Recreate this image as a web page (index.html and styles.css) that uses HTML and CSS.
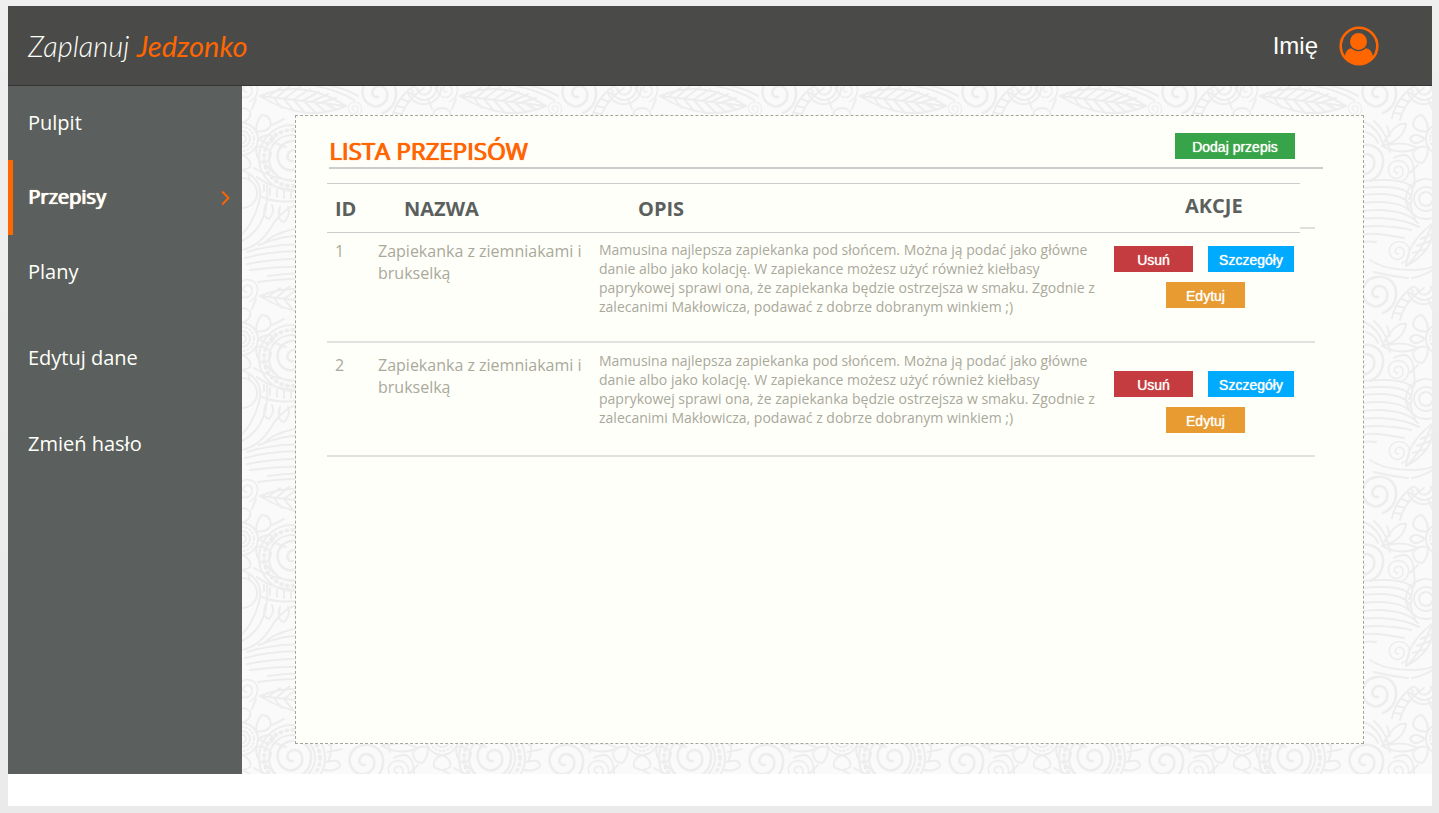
FILE: index.html
```html
<!DOCTYPE html>
<html lang="pl">
<head>
<meta charset="utf-8">
<meta name="viewport" content="width=device-width, initial-scale=1">
<title>Zaplanuj Jedzonko – Lista przepisów</title>
<link rel="stylesheet" href="styles.css">
</head>
<body>
<div class="page">
  <header class="topbar">
    <a class="logo" href="#"><span class="logo-light">Zaplanuj</span> <span class="logo-accent">Jedzonko</span></a>
    <a class="user" href="#">
      <span>Imię</span>
      <svg class="avatar" viewBox="0 0 40 40" aria-hidden="true">
        <circle cx="20" cy="20" r="18.3" fill="none" stroke="#ff6600" stroke-width="2.6"/>
        <circle cx="19.500" cy="15.500" r="8.500" fill="#ff6600"/>
        <path fill="#ff6600" d="M6 31C6.200 26.500 8 23 12 22.300C14.500 23.500 16 25.300 19.500 25.300C23 25.300 25 23.500 27 22.300C31.500 23 33.500 26.500 33.800 31C30.500 36 26 38.500 20 38.500C14 38.500 9.500 36 6 31Z"/>
      </svg>
    </a>
  </header>
  <div class="layout">
    <nav class="sidebar">
      <a class="nav-item" href="#">Pulpit</a>
      <a class="nav-item active" href="#" aria-current="page">Przepisy
        <svg class="chevron" viewBox="0 0 9 16" aria-hidden="true"><path d="M1.200 1.500L7.500 8L1.200 14.500" fill="none" stroke="#ff6600" stroke-width="1.800"/></svg>
      </a>
      <a class="nav-item" href="#">Plany</a>
      <a class="nav-item tall" href="#">Edytuj dane</a>
      <a class="nav-item tall" href="#">Zmień hasło</a>
    </nav>
    <main class="content">
      <section class="card">
        <div class="card-head">
          <h1>LISTA PRZEPISÓW</h1>
          <button class="btn green" type="button">Dodaj przepis</button>
        </div>
        <table class="recipes">
          <colgroup><col class="c-id"><col class="c-name"><col class="c-desc"><col class="c-act"><col class="c-end"></colgroup>
          <thead>
            <tr>
              <th scope="col">ID</th>
              <th scope="col" class="h-name">NAZWA</th>
              <th scope="col" class="h-desc">OPIS</th>
              <th scope="col" class="h-act">AKCJE</th>
              <td class="h-end"><span class="stub"></span></td>
            </tr>
          </thead>
          <tbody>
            <tr class="first">
              <td class="name">1</td>
              <td class="name">Zapiekanka z ziemniakami i brukselką</td>
              <td class="desc">Mamusina najlepsza zapiekanka pod słońcem. Można ją podać jako główne danie albo jako kolację. W zapiekance możesz użyć również kiełbasy paprykowej sprawi ona, że zapiekanka będzie ostrzejsza w smaku. Zgodnie z zalecanimi Makłowicza, podawać z dobrze dobranym winkiem ;)</td>
              <td class="act" colspan="2">
                <div class="actions">
                  <button class="btn red" type="button">Usuń</button>
                  <button class="btn blue" type="button">Szczegóły</button>
                  <button class="btn amber" type="button">Edytuj</button>
                </div>
              </td>
            </tr>
            <tr class="next">
              <td class="name">2</td>
              <td class="name">Zapiekanka z ziemniakami i brukselką</td>
              <td class="desc">Mamusina najlepsza zapiekanka pod słońcem. Można ją podać jako główne danie albo jako kolację. W zapiekance możesz użyć również kiełbasy paprykowej sprawi ona, że zapiekanka będzie ostrzejsza w smaku. Zgodnie z zalecanimi Makłowicza, podawać z dobrze dobranym winkiem ;)</td>
              <td class="act" colspan="2">
                <div class="actions">
                  <button class="btn red" type="button">Usuń</button>
                  <button class="btn blue" type="button">Szczegóły</button>
                  <button class="btn amber" type="button">Edytuj</button>
                </div>
              </td>
            </tr>
          </tbody>
        </table>
      </section>
    </main>
  </div>
</div>
</body>
</html>
```
FILE: styles.css
```css
* { box-sizing: border-box; }

body {
  margin: 0;
  padding: 6px 7px 7px 8px;
  min-height: 100vh;
  display: flex;
  background: linear-gradient(#efefef, #eaeaea);
  font-family: "Open Sans", "Noto Sans", sans-serif;
}

a { color: inherit; text-decoration: none; }

.page {
  flex: 1;
  display: flex;
  flex-direction: column;
  padding-bottom: 32px;
  background: #fff;
}

.topbar {
  display: flex;
  align-items: center;
  justify-content: space-between;
  height: 80px;
  padding: 0 53px 0 20px;
  background: #4a4a48;
  border-bottom: 1px solid #383634;
}

.logo {
  font: italic 300 29px "Lato", sans-serif;
  white-space: nowrap;
}
.logo-light { color: #fefefa; }
.logo-accent { color: #ff6600; font-weight: 400; }

.user {
  display: flex;
  align-items: center;
  gap: 21px;
  color: #fffffa;
  font: 24px "Liberation Sans", Arial, sans-serif;
}
.avatar { width: 40px; height: 40px; }

.layout { flex: 1; display: flex; }

.sidebar {
  flex: 0 0 234px;
  display: flex;
  flex-direction: column;
  background: #5b5f5e;
  color: #fffffa;
  font-size: 20px;
}
.nav-item {
  display: flex;
  align-items: center;
  justify-content: space-between;
  height: 75px;
  padding: 0 12px 2px 20px;
}
.nav-item:first-child { height: 74px; }
.nav-item.active {
  padding-left: 15px;
  border-left: 5px solid #ff6600;
  text-shadow: 0 0 1px #fffffa, 1px 0 #fffffa;
}
.nav-item.tall { height: 86px; }
.nav-item:not(.tall) + .tall { margin-top: 5px; }
.chevron { width: 9px; height: 16px; margin-top: 3px; }

.content {
  flex: 1;
  min-width: 0;
  display: flex;
  padding: 29px 68px 30px 53px;
  background-color: #fafafa;
  background-image: url("data:image/svg+xml,%3Csvg xmlns='http://www.w3.org/2000/svg' width='200' height='200' fill='none' stroke='%23ededed' stroke-width='2' stroke-linecap='round'%3E%3Cdefs%3E%3Cpath id='s' d='M1 3C-3 4-6 0-4-4C-1-10 8-9 10-2C12 7 4 14-4 12C-14 9-17-2-12-10C-7-18 6-20 14-13Q20-7 19 1Q18 14 6 19' stroke-width='2.600'/%3E%3Cg id='f'%3E%3Ccircle r='4'/%3E%3Ccircle r='8'/%3E%3Ccircle r='12' stroke-dasharray='1 3'/%3E%3Ccircle r='16'/%3E%3Cpath d='M0-16Q10-20 8-28Q0-34-8-28Q-10-20 0-16M14-8Q25-6 29-14Q28-24 20-24Q14-18 14-8M14 8Q14 20 20 24Q28 24 29 14Q25 6 14 8M0 16Q-10 20-8 28Q0 34 8 28Q10 20 0 16M17 0Q28-8 32 0Q28 8 17 0M-14-8Q-25-6-29-14Q-28-24-20-24Q-14-18-14-8M-14 8Q-14 20-20 24Q-28 24-29 14Q-25 6-14 8M-17 0Q-28-8-32 0Q-28 8-17 0M10-30L14-40M30-14L42-20M33 4L44 8M24 26L32 34M6 34L8 42M-10-30L-14-40M-24 26L-32 34'/%3E%3C/g%3E%3C/defs%3E%3Cuse href='%23s' transform='translate(135 8)'/%3E%3Cuse href='%23s' transform='translate(135 208)'/%3E%3Cuse href='%23s' transform='translate(50 72)'/%3E%3Cuse href='%23s' transform='translate(122 76)'/%3E%3Cuse href='%23s' transform='translate(155 85) scale(.6)'/%3E%3Cuse href='%23s' transform='translate(156 166) scale(.6)'/%3E%3Cuse href='%23s' transform='translate(4 4) scale(.6)'/%3E%3Cuse href='%23s' transform='translate(204 4) scale(.6)'/%3E%3Cuse href='%23s' transform='translate(4 204) scale(.6)'/%3E%3Cuse href='%23s' transform='translate(112 23) scale(.4)'/%3E%3Cuse href='%23f' y='53'/%3E%3Cuse href='%23f' x='200' y='53'/%3E%3Ccircle cx='50' cy='72' r='23'/%3E%3Ccircle cx='50' cy='72' r='28' stroke-width='4' stroke-dasharray='1 5'/%3E%3Ccircle cx='50' cy='72' r='33'/%3E%3Cpath d='M18 10Q60-8 104 20Q64 38 18 10L104 20M26 11L38 2M34 12L48 0M42 13L58 1M51 14L68 3M60 15L77 6M69 16L86 8M78 17L94 12M32 12L40 22M42 13L52 25M52 14L63 27M62 15L74 27M72 16L84 26M82 17L93 23M150 32Q154 12 174-2M158 34Q162 16 182 2M153 27L160 28M155 20L163 22M160 13L167 16M166 6L172 10M173 1L178 5M74 0Q96 4 112 14M88 0Q103 2 116 10'/%3E%3Cpath d='M170 4a12 12 0 0 0 24-4M175 3a7 7 0 0 0 14-3M166 7a17 17 0 0 0 33-5M0 92a14 14 0 0 1 0 30M0 84Q23 94 17 116T0 148M0 155Q28 140 25 100M0 164Q18 160 30 140T60 118M12 82Q38 98 76 94M15 91Q36 108 78 103M20 111Q40 120 76 111M22 99L22 105M28 102L28 109M35 104L35 111M42 105L42 112M49 105L49 112M24 118Q19 130 27 133Q33 126 30 119M38 121Q34 134 42 136Q49 129 46 121M54 121Q51 133 59 134Q65 128 61 120M5 166Q40 155 75 160M3 172Q40 162 76 167M5 178Q42 171 77 174M8 184Q42 179 76 181M17 159Q42 148 70 149M24 155Q40 143 66 141M26 190Q52 186 77 188M16 196Q58 190 80 196M84 44Q93 61 86 76M86 51L103 45M87 59L103 54M86 66L100 63M84 76Q98 72 98 80Q94 86 82 84M78 90Q92 88 98 96'/%3E%3Ccircle cx='184' cy='113' r='7'/%3E%3Ccircle cx='184' cy='113' r='12'/%3E%3Ccircle cx='184' cy='113' r='20'/%3E%3Cpath d='M140 60Q153 35 164 38Q162 54 140 60Q160 54 176 62Q157 70 140 60M145 40L148 50M132 35Q145 46 148 66M122 36Q136 42 140 56M124 46Q133 49 136 57M152 72Q170 62 172 85T169 99M86 106Q108 93 144 94T167 113M86 113Q108 100 142 101T168 120M86 120Q110 107 140 108T170 127M87 127Q111 115 139 116T173 132M89 134Q113 123 139 124T176 137M92 141Q114 131 138 132T177 141M96 148Q116 139 137 140T169 144M102 155Q120 146 136 148T162 152M109 161Q122 154 134 156M164 180Q166 156 190 138Q194 164 164 180Q180 166 190 138M171 167L184 163M175 160L188 155M179 153L190 148M128 174Q143 184 171 184T199 168M132 186Q148 190 166 192M170 192Q184 190 199 178M90 164Q103 151 116 170M91 172Q105 161 109 181M78 122Q90 142 83 164M95 182Q105 193 114 184M85 193Q101 202 111 193'/%3E%3C/svg%3E");
}

.card {
  flex: 1;
  min-width: 0;
  padding: 15px 40px 24px 31px;
  background: #fffffa;
  border: 1px dashed #a5a59a;
}

.card-head {
  display: flex;
  justify-content: space-between;
  align-items: flex-start;
  height: 38px;
  margin-left: 2px;
  padding: 2px 28px 0 0;
  border-bottom: 2px solid #ccc;
}
h1 {
  margin: 0;
  color: #ff6600;
  font-size: 24px;
  font-weight: 400;
  line-height: 36px;
  text-shadow: 0 0 1px #ff6600, 1px 0 #ff6600;
}

.btn {
  width: 79px;
  height: 26px;
  padding: 2px 0 0;
  border: 0;
  color: #fffffa;
  font: 14px "Liberation Sans", Arial, sans-serif;
  text-shadow: 0 0 1px #fffffa;
}
.green { width: 120px; background: #38a449; }
.red { background: #c43c3f; }
.blue { width: 86px; background: #00aaff; }
.amber { background: #e79b30; }

.recipes {
  width: calc(100% - 8px);
  margin-top: 14px;
  border-collapse: separate;
  border-spacing: 0;
  table-layout: fixed;
}
.c-id { width: 43px; }
.c-name { width: 221px; }
.c-act { width: 193px; }
.c-end { width: 15px; }

th, td { padding: 0 8px; text-align: left; vertical-align: top; }
th {
  height: 50px;
  padding-top: 2px;
  vertical-align: middle;
  border-top: 1px solid #ccc;
  border-bottom: 1px solid #ccc;
  color: #5b5f5e;
  font-size: 20px;
  font-weight: 700;
  line-height: 24px;
}
.h-name { padding-left: 34px; }
.h-desc { padding-left: 47px; }
.h-act { padding: 0 0 4px 78px; }
.h-end { padding: 0 0 4px; vertical-align: bottom; }
.stub { display: block; height: 2px; background: #e0e0de; }

tbody td { border-bottom: 2px solid #e1e1df; color: #a9a99b; }
.first td { height: 110px; padding-top: 7px; }
.next td { height: 114px; padding-top: 8px; }
.name { font-size: 16px; line-height: 22px; }
.next .name { padding-top: 11px; }
.desc { font-size: 14px; line-height: 19px; }

.first .act { padding: 13px 0 0 7px; }
.next .act { padding: 28px 0 0 7px; }
.actions {
  display: flex;
  flex-wrap: wrap;
  gap: 10px 15px;
}
.amber { margin-left: 52px; }
```
